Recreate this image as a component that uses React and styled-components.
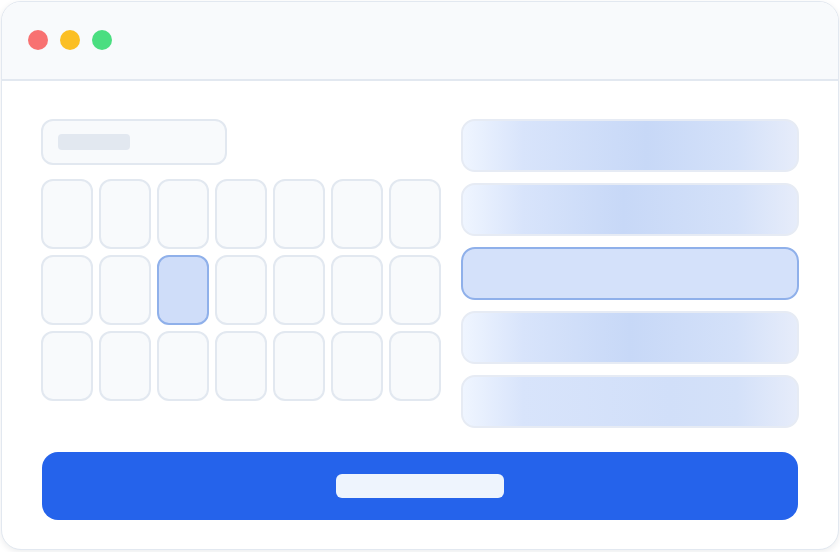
import React from "react";
import styled, { createGlobalStyle } from "styled-components";

const Global = createGlobalStyle`
  html, body { margin: 0; padding: 0; background: #ffffff; }
  body { font-family: Inter, "Noto Sans", sans-serif; }
  * { box-sizing: border-box; }
`;

const Stage = styled.div`
  width: 840px;
  height: 552px;
  padding: 1px 1px 2px 1px;
`;

const Window = styled.div`
  width: 838px;
  height: 549px;
  border: 1.5px solid #e2e8f0;
  border-radius: 20px;
  background: #ffffff;
  overflow: hidden;
  box-shadow: 0 2px 6px rgba(15, 23, 42, 0.08);
  display: flex;
  flex-direction: column;
`;

const TitleBar = styled.div`
  height: 79px;
  flex: none;
  background: #f8fafc;
  border-bottom: 2px solid #e2e8f0;
  display: flex;
  align-items: center;
  gap: 12px;
  padding: 0 0 2px 26px;
`;

const Dot = styled.span`
  width: 20px;
  height: 20px;
  border-radius: 50%;
  background: ${(p) => p.$color};
`;

const Body = styled.div`
  padding: 38px 30px 0 39px;
  display: flex;
  flex-direction: column;
  gap: 24px;
`;

const Columns = styled.div`
  display: flex;
  gap: 20px;
`;

const LeftCol = styled.div`
  width: 400px;
  flex: none;
  display: flex;
  flex-direction: column;
  gap: 14px;
`;

const Search = styled.div`
  width: 186px;
  height: 46px;
  border: 2px solid #e2e8f0;
  border-radius: 12px;
  background: #f8fafc;
  display: flex;
  align-items: center;
  padding-left: 15px;
`;

const Placeholder = styled.div`
  width: 72px;
  height: 16px;
  border-radius: 4px;
  background: #e2e8f0;
`;

const Grid = styled.div`
  display: grid;
  grid-template-columns: repeat(7, 52px);
  grid-auto-rows: 70px;
  gap: 6px;
`;

const Cell = styled.div`
  border-radius: 12px;
  border: 2px solid ${(p) => (p.$active ? "#8fb0ea" : "#e2e8f0")};
  background: ${(p) => (p.$active ? "#cfddf9" : "#f8fafc")};
`;

const RightCol = styled.div`
  width: 338px;
  flex: none;
  display: flex;
  flex-direction: column;
  gap: 11px;
`;

const Row = styled.div`
  height: 53px;
  border-radius: 14px;
  border: 2px solid ${(p) => (p.$active ? "#8fb0ea" : "#e6ebf4")};
  background: ${(p) =>
    p.$active
      ? "#d4e1fa"
      : `linear-gradient(90deg, #eff5ff 0%, #d8e4fb 18%, ${p.$mid} ${p.$peak}%, #d4e1f9 82%, #e6ecfa 100%)`};
`;

const Button = styled.div`
  width: 756px;
  height: 68px;
  margin-left: 1px;
  border-radius: 16px;
  background: #2563eb;
  display: flex;
  align-items: center;
  justify-content: center;
`;

const ButtonLabel = styled.div`
  width: 168px;
  height: 24px;
  border-radius: 6px;
  background: #eef4fd;
`;

const rows = [
  { peak: 55, mid: "#c7d8f7" },
  { peak: 48, mid: "#c7d8f7" },
  { active: true },
  { peak: 50, mid: "#c7d8f7" },
  { peak: 62, mid: "#d1dff9" },
];

export default function App() {
  const cells = Array.from({ length: 21 }, (_, i) => i);
  return (
    <>
      <Global />
      <Stage>
        <Window>
          <TitleBar>
            <Dot $color="#f87171" />
            <Dot $color="#fbbf24" />
            <Dot $color="#4ade80" />
          </TitleBar>
          <Body>
            <Columns>
              <LeftCol>
                <Search>
                  <Placeholder />
                </Search>
                <Grid>
                  {cells.map((i) => (
                    <Cell key={i} $active={i === 9} />
                  ))}
                </Grid>
              </LeftCol>
              <RightCol>
                {rows.map((r, i) => (
                  <Row key={i} $active={r.active} $peak={r.peak} $mid={r.mid} />
                ))}
              </RightCol>
            </Columns>
            <Button>
              <ButtonLabel />
            </Button>
          </Body>
        </Window>
      </Stage>
    </>
  );
}
